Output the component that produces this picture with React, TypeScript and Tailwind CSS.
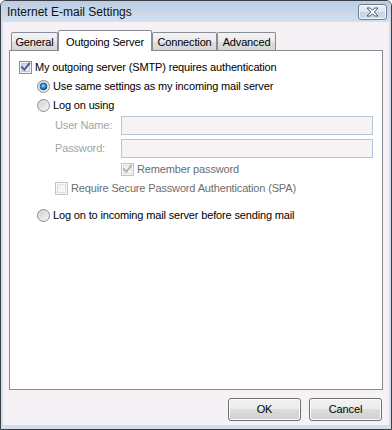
import React from "react";

const FONT = { fontFamily: '"Liberation Sans", Arial, sans-serif' };

function CheckBox({ checked, disabled, id }: { checked?: boolean; disabled?: boolean; id: string }) {
  const outer = disabled ? "#c4c4c4" : "#8e8f8f";
  const innerStroke = disabled ? "#e0e0e0" : "#c6c6c6";
  const mark = disabled ? "#b3b3b3" : "#4a5fa0";
  return (
    <svg width="13" height="13" viewBox="0 0 13 13" className="shrink-0">
      <defs>
        <linearGradient id={id} x1="0" y1="0" x2="1" y2="1">
          <stop offset="0" stopColor={disabled ? "#f0f0f0" : "#cbcfd5"} />
          <stop offset="1" stopColor={disabled ? "#fafafa" : "#f6f6f6"} />
        </linearGradient>
      </defs>
      <rect x="0.5" y="0.5" width="12" height="12" fill="#f7f7f7" stroke={outer} />
      <rect x="2.5" y="2.5" width="8" height="8" fill={`url(#${id})`} stroke={innerStroke} />
      {checked && (
        <path d="M3 6.2 L5.3 8.8 L10.2 2.6" stroke={mark} strokeWidth="2" fill="none" strokeLinecap="square" />
      )}
    </svg>
  );
}

function Radio({ checked, id }: { checked?: boolean; id: string }) {
  return (
    <svg width="13" height="13" viewBox="0 0 13 13" className="shrink-0">
      <defs>
        <linearGradient id={id + "o"} x1="0" y1="0" x2="1" y2="1">
          <stop offset="0" stopColor="#c8cbd0" />
          <stop offset="1" stopColor="#f8f8f8" />
        </linearGradient>
        <radialGradient id={id + "d"} cx="0.45" cy="0.4" r="0.6">
          <stop offset="0" stopColor="#a6e3fb" />
          <stop offset="0.5" stopColor="#2e8fd6" />
          <stop offset="1" stopColor="#0c4a8f" />
        </radialGradient>
      </defs>
      <circle cx="6.5" cy="6.5" r="6" fill={`url(#${id}o)`} stroke="#8e8f8f" />
      <circle cx="6.5" cy="6.5" r="4.3" fill="none" stroke="#e9e9e9" strokeWidth="0.8" />
      {checked && <circle cx="6.5" cy="6.5" r="3.4" fill={`url(#${id}d)`} stroke="#1b4f8c" strokeWidth="0.8" />}
    </svg>
  );
}

function Tab({ label, selected, w }: { label: string; selected?: boolean; w: string }) {
  if (selected) {
    return (
      <div
        className={`${w} h-[21px] -mb-px relative z-10 bg-white border border-b-0 border-[#898c95] rounded-t-[2px] flex items-start justify-center pt-[3px] text-[11px] text-black`}
      >
        {label}
      </div>
    );
  }
  return (
    <div
      className={`${w} h-[18px] border border-b-0 border-[#898c95] rounded-t-[2px] bg-[linear-gradient(to_bottom,#f3f3f3_0%,#ebebeb_50%,#dedede_50%,#d6d6d6_100%)] flex items-center justify-center pt-px text-[11px] text-black`}
    >
      {label}
    </div>
  );
}

function Button({ label }: { label: string }) {
  return (
    <div className="w-[73px] h-[23px] rounded-[3px] border border-[#707070] bg-[linear-gradient(to_bottom,#f2f2f2_0%,#ebebeb_50%,#dddddd_50%,#cfcfcf_100%)] shadow-[inset_0_0_0_1px_#fcfcfc] flex items-center justify-center text-[11px] text-black">
      {label}
    </div>
  );
}

export default function App() {
  return (
    <div style={FONT} className="w-[392px] h-[430px] box-border border border-[#3c3f44] rounded-t-[6px] bg-[#d1deee] flex flex-col overflow-hidden tracking-[-0.15px]">
      {/* title bar */}
      <div className="h-[21px] shrink-0 flex items-start justify-between bg-[linear-gradient(to_bottom,#bccde4_0%,#c9d8ea_60%,#d3e0ef_100%)]">
        <div className="pl-[6px] pt-[4px] text-[12px] leading-[14px] text-[#111] tracking-normal">Internet E-mail Settings</div>
        <div className="mt-[3px] mr-[4px] w-[29px] h-[16px] rounded-[3px] border border-[#6f7e96] bg-[linear-gradient(to_bottom,#edf2f8_0%,#dbe4ef_50%,#c6d3e3_50%,#cfdcea_100%)] shadow-[inset_0_0_0_1px_#f4f7fb] flex items-center justify-center">
          <svg width="13" height="10" viewBox="0 0 13 10">
            <path
              d="M1 1 H4.3 L6.5 3.3 L8.7 1 H12 L8.3 5 L12 9 H8.7 L6.5 6.7 L4.3 9 H1 L4.7 5 Z"
              fill="#ffffff"
              stroke="#4d586b"
              strokeWidth="1"
              strokeLinejoin="round"
            />
          </svg>
        </div>
      </div>

      {/* body */}
      <div className="flex-1 mx-[2px] mb-[4px] bg-[#f5f1f5] flex flex-col">
        {/* tabs */}
        <div className="pt-[8px] px-[6px]">
          <div className="flex items-end h-[20px] pl-[2px]">
            <Tab label="General" w="w-[47px]" />
            <Tab label="Outgoing Server" w="w-[94px]" selected />
            <Tab label="Connection" w="w-[65px]" />
            <Tab label="Advanced" w="w-[59px]" />
          </div>
          <div className="h-[340px] bg-white border border-[#898c95] flex flex-col text-[11px] text-black">
            <div className="pt-[7px]" />
            <div className="h-[19px] flex items-center pl-[9px] gap-[3px]">
              <CheckBox id="cb1" checked />
              <span>My outgoing server (SMTP) requires authentication</span>
            </div>
            <div className="h-[19px] flex items-center pl-[27px] gap-[3px]">
              <Radio id="r1" checked />
              <span>Use same settings as my incoming mail server</span>
            </div>
            <div className="h-[19px] flex items-center pl-[27px] gap-[3px]">
              <Radio id="r2" />
              <span>Log on using</span>
            </div>
            <div className="mt-px h-[19px] flex items-center pl-[45px]">
              <span className="w-[66px] text-[#a3a3a3]">User Name:</span>
              <div className="w-[252px] h-[19px] border border-[#b4c6dd] bg-[#f6f2f6]" />
            </div>
            <div className="mt-[4px] h-[19px] flex items-center pl-[45px]">
              <span className="w-[66px] text-[#a3a3a3]">Password:</span>
              <div className="w-[252px] h-[19px] border border-[#b4c6dd] bg-[#f6f2f6]" />
            </div>
            <div className="mt-[2px] h-[19px] flex items-center pl-[111px] gap-[3px]">
              <CheckBox id="cb2" checked disabled />
              <span className="text-[#6d6d6d]">Remember password</span>
            </div>
            <div className="h-[19px] flex items-center pl-[45px] gap-[3px]">
              <CheckBox id="cb3" disabled />
              <span className="text-[#6d6d6d]">Require Secure Password Authentication (SPA)</span>
            </div>
            <div className="mt-[8px] h-[19px] flex items-center pl-[27px] gap-[3px]">
              <Radio id="r3" />
              <span>Log on to incoming mail server before sending mail</span>
            </div>
          </div>
        </div>

        {/* buttons */}
        <div className="mt-[8px] flex justify-end gap-[8px] pr-[7px]">
          <Button label="OK" />
          <Button label="Cancel" />
        </div>
      </div>
    </div>
  );
}
